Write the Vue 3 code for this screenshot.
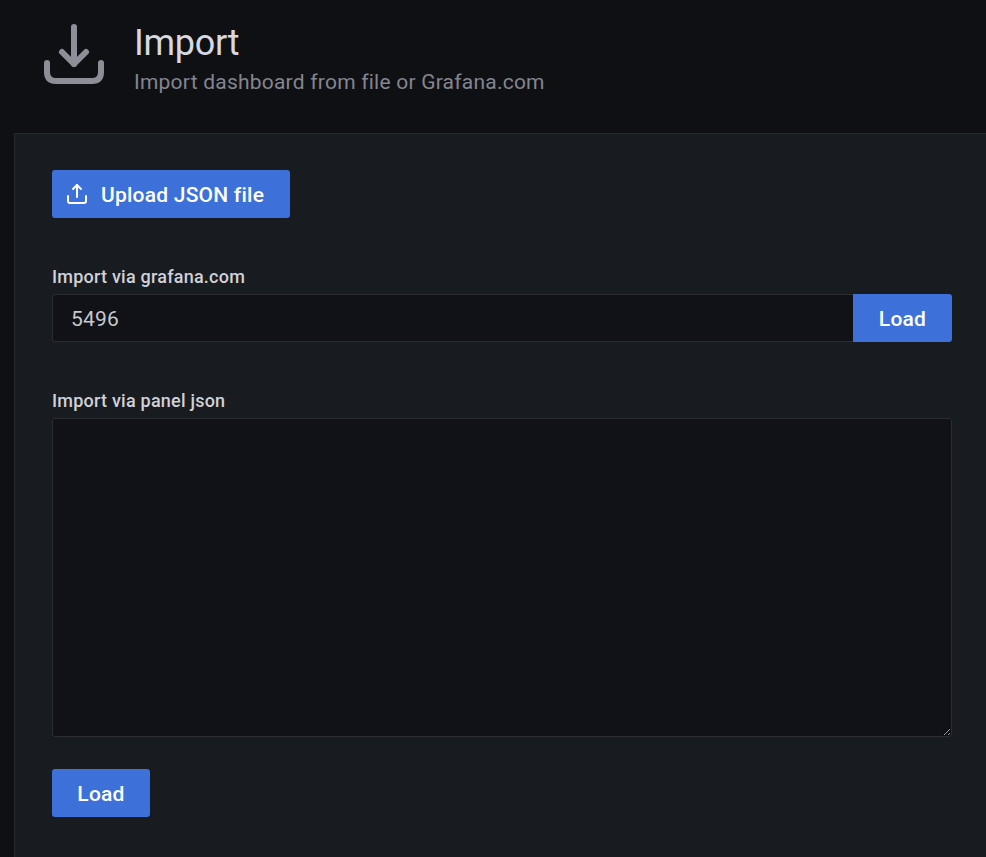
<script setup>
const placeholder = ''
</script>

<template>
  <div class="page">
    <header class="head">
      <svg class="head-icon" width="60" height="60" viewBox="0 0 60 60" fill="none" stroke="#8e8e98" stroke-width="6" stroke-linecap="round" stroke-linejoin="round">
        <path d="M30 3V40" />
        <path d="M18 28L30 40L42 28" />
        <path d="M3 39V48Q3 57 12 57H48Q57 57 57 48V39" />
      </svg>
      <div class="head-text">
        <h1 class="title">Import</h1>
        <div class="sub">Import dashboard from file or Grafana.com</div>
      </div>
    </header>
    <main class="panel">
      <button class="btn upload">
        <svg width="24" height="24" viewBox="0 0 24 24" fill="none" stroke="#fff" stroke-width="2" stroke-linecap="round" stroke-linejoin="round">
          <path d="M12 3V15" />
          <path d="M8 7L12 3L16 7" />
          <path d="M3 14V19Q3 21 5 21H19Q21 21 21 19V14" />
        </svg>
        <span class="upload-text">Upload JSON file</span>
      </button>
      <label class="label first">Import via grafana.com</label>
      <div class="row">
        <input class="input" value="5496" />
        <button class="btn append">Load</button>
      </div>
      <label class="label second">Import via panel json</label>
      <textarea class="area" :placeholder="placeholder"></textarea>
      <button class="btn load">Load</button>
    </main>
  </div>
</template>

<style>
html, body { background: #0f1014; }
</style>

<style scoped>
.page {
  width: 986px;
  height: 857px;
  overflow: hidden;
  background: #0f1014;
  font-family: Roboto, "Liberation Sans", sans-serif;
  letter-spacing: 0.225px;
  display: flex;
  flex-direction: column;
}
.head {
  height: 133px;
  box-sizing: border-box;
  padding: 24px 0 0 44px;
  display: flex;
  gap: 30px;
  flex: none;
}
.head-icon { flex: none; }
.title {
  margin: 0;
  font-size: 36px;
  line-height: 38px;
  font-weight: 400;
  letter-spacing: -0.3px;
  color: #d8d9e0;
}
.sub {
  margin-top: 8px;
  font-size: 21px;
  line-height: 24px;
  color: #84858f;
}
.panel {
  margin-left: 14px;
  flex: 1;
  box-sizing: border-box;
  background: #181b20;
  border-top: 1px solid #26282d;
  border-left: 1px solid #26282d;
  padding: 36px 34px 0 37px;
  display: flex;
  flex-direction: column;
  align-items: flex-start;
}
.btn {
  height: 48px;
  border: 0;
  border-radius: 3px;
  background: #3d71d9;
  color: #fff;
  font-family: inherit;
  letter-spacing: inherit;
  font-size: 21px;
  font-weight: 500;
  padding: 2px 0 0;
  flex: none;
}
.upload {
  width: 238px;
  padding: 0 0 0 13px;
  display: flex;
  align-items: center;
  gap: 12px;
}
.upload-text {
  padding-top: 2px;
}
.label {
  display: block;
  font-size: 18px;
  line-height: 20px;
  font-weight: 500;
  color: #d0d1d9;
}
.first { margin-top: 49px; margin-bottom: 7px; }
.second { margin-top: 49px; margin-bottom: 7px; }
.row {
  display: flex;
  width: 900px;
  height: 48px;
}
.input {
  flex: 1;
  min-width: 0;
  box-sizing: border-box;
  background: #111217;
  border: 1px solid #2b2d32;
  border-right: 0;
  border-radius: 3px 0 0 3px;
  color: #c7c8d0;
  font-family: inherit;
  letter-spacing: inherit;
  font-size: 21px;
  padding: 2px 18px 0;
  outline: none;
}
.append {
  width: 99px;
  border-radius: 0 3px 3px 0;
}
.area {
  display: block;
  width: 900px;
  height: 319px;
  box-sizing: border-box;
  background: #111217;
  border: 1px solid #2b2d32;
  border-radius: 3px;
  color: #c7c8d0;
  font-family: inherit;
  font-size: 21px;
  outline: none;
  flex: none;
  color-scheme: dark;
}
.load {
  margin-top: 32px;
  width: 98px;
}
</style>
